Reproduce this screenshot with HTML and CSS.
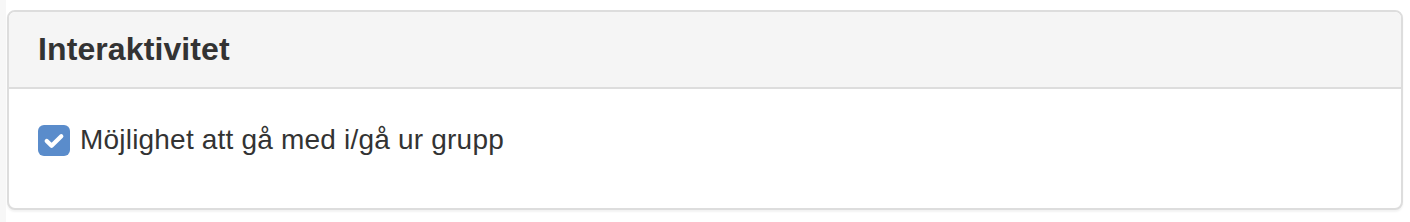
FILE: index.html
```html
<!DOCTYPE html>
<html lang="sv">
<head>
  <meta charset="UTF-8">
  <title>Interaktivitet</title>
  <link rel="stylesheet" href="styles.css">
</head>
<body>

<div class="page">
  <section class="panel">
    <div class="panel-heading">
      <h3 class="panel-title">Interaktivitet</h3>
    </div>
    <div class="panel-body">
      <label class="checkbox">
        <span class="box">
          <svg viewBox="0 0 32 32" width="32" height="31">
            <path d="M8.5 16.5 L13.5 21.5 L23.5 11.5" fill="none" stroke="#fff" stroke-width="4.4" stroke-linecap="round" stroke-linejoin="round"/>
          </svg>
        </span>
        <span class="text">Möjlighet att gå med i/gå ur grupp</span>
      </label>
    </div>
  </section>
</div>

</body>
</html>
```

FILE: styles.css
```css
body {
  margin: 0;
  background: #fff;
  color: #333;
  font-family: "Liberation Sans", Arial, sans-serif;
}
.page {
  border-left: 6px solid #f7f7f7;
  padding: 10px 7px 0 1px;
  height: 212px;
}
.panel {
  border: 2px solid #ddd;
  border-radius: 8px;
  background: #fff;
  box-shadow: 0 2px 2px rgba(0,0,0,0.05);
}
.panel-heading {
  background: #f5f5f5;
  border-bottom: 2px solid #ddd;
  border-radius: 6px 6px 0 0;
  padding: 20px 29px;
}
.panel-title {
  margin: 0;
  font-size: 32px;
  line-height: 35px;
  font-weight: bold;
  color: #333;
  letter-spacing: 0.1px;
}
.panel-body {
  padding: 31px 29px 29px;
}
.checkbox {
  display: flex;
  align-items: center;
  gap: 10px;
  height: 40px;
  margin-bottom: 19px;
  font-size: 28px;
  line-height: 40px;
}
.box {
  width: 32px;
  height: 31px;
  border-radius: 6px;
  background: #5a8ccb;
  display: flex;
  align-items: center;
  justify-content: center;
}
.text {
  color: #333;
  letter-spacing: 0.2px;
}
```
